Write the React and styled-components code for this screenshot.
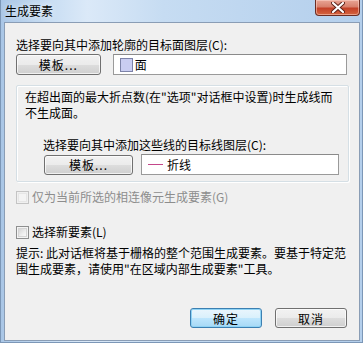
import React from 'react';
import styled, { createGlobalStyle } from 'styled-components';

const GlobalStyle = createGlobalStyle`
  html, body { margin: 0; padding: 0; background: #fff; }
  body { font-family: "Noto Sans CJK SC", "Noto Sans", sans-serif; font-size: 12px; color: #000; }
`;

const Window = styled.div`
  width: 363px;
  height: 343px;
  box-sizing: border-box;
  display: flex;
  flex-direction: column;
  padding: 0 2px 1px 3px;
  background: linear-gradient(to right, #a9c6e6 0%, #c9def3 14%, #dbe9f8 24%, #c6dcf2 45%, #bcd5ef 75%, #b4cfec 100%);
  border-left: 1px solid #7c97b7;
  border-right: 1px solid #7c97b7;
  border-bottom: 1px solid #7c97b7;
`;

const TitleBar = styled.div`
  height: 22px;
  display: flex;
  align-items: flex-start;
  flex-shrink: 0;
`;

const Title = styled.div`
  font-size: 12px;
  line-height: 14px;
  margin-top: 4px;
  margin-left: 1px;
  color: #000;
  text-shadow: 0 0 6px rgba(255,255,255,0.9);
`;

const CloseButton = styled.div`
  margin-left: auto;
  width: 45px;
  height: 16px;
  box-sizing: border-box;
  border: 1px solid #6b2c22;
  border-top: none;
  border-radius: 0 0 4px 4px;
  background: linear-gradient(to bottom, #e9a595 0%, #d8806c 45%, #c44128 55%, #d5653f 100%);
  box-shadow: inset 0 0 0 1px rgba(255,220,210,0.5);
  display: flex;
  align-items: center;
  justify-content: center;
`;

const Client = styled.div`
  flex: 1;
  display: flex;
  flex-direction: column;
  background: #f0f0f0;
  border: 1px solid #8a9db5;
  padding: 0 12px 12px 11px;
`;

const Label = styled.div`
  line-height: 16px;
  margin-top: ${p => p.$top || 0}px;
  margin-left: ${p => p.$left || 0}px;
  white-space: nowrap;
`;

const Row = styled.div`
  display: flex;
  align-items: center;
  gap: ${p => p.$gap}px;
  margin-top: 1px;
  margin-left: ${p => p.$left || 0}px;
`;

const Button = styled.button`
  width: ${p => p.$w}px;
  height: ${p => p.$h || 21}px;
  box-sizing: border-box;
  padding: 0;
  font: inherit;
  font-size: 12px;
  color: #000;
  border: 1px solid ${p => (p.$default ? '#3c7fb1' : '#707070')};
  border-radius: 3px;
  background: ${p =>
    p.$default
      ? 'linear-gradient(to bottom, #eaf6fd 0%, #d9f0fc 50%, #bee6fd 51%, #a7d9f5 100%)'
      : 'linear-gradient(to bottom, #f2f2f2 0%, #ebebeb 50%, #dddddd 51%, #cfcfcf 100%)'};
  box-shadow: inset 0 0 0 1px ${p => (p.$default ? '#8fd3f5' : 'rgba(255,255,255,0.7)')};
  display: flex;
  align-items: center;
  justify-content: center;
  letter-spacing: 1px;
`;

const Field = styled.div`
  width: ${p => p.$w}px;
  height: 21px;
  box-sizing: border-box;
  background: #fff;
  border: 1px solid #9a9a9a;
  border-top-color: #8a8a8a;
  display: flex;
  align-items: center;
  padding-left: ${p => p.$pad}px;
  gap: 2px;
`;

const FillSwatch = styled.span`
  width: 13px;
  height: 14px;
  box-sizing: border-box;
  background: #c9cdf1;
  border: 1px solid #7d83a8;
`;

const LineSwatch = styled.span`
  width: 15px;
  height: 1px;
  background: #c4468a;
  margin-right: 2px;
`;

const GroupBox = styled.div`
  margin-top: 10px;
  width: 333px;
  height: 97px;
  box-sizing: border-box;
  border: 1px solid #d5dfe5;
  box-shadow: inset 1px 1px 0 #fff, 1px 1px 0 #fff;
  border-radius: 2px;
  padding: 3px 0 0 8px;
`;

const Note = styled.div`
  line-height: 16px;
  white-space: nowrap;
`;

const CheckRow = styled.div`
  display: flex;
  align-items: center;
  gap: 3px;
  line-height: 16px;
  margin-top: ${p => p.$top}px;
  color: ${p => (p.$disabled ? '#8d8d8d' : '#000')};
`;

const Box = styled.span`
  width: 13px;
  height: 13px;
  box-sizing: border-box;
  border: 1px solid ${p => (p.$disabled ? '#c4c4c4' : '#8e8f8f')};
  background: ${p =>
    p.$disabled
      ? '#f4f4f4'
      : 'linear-gradient(135deg, #cbcbcb 0%, #f0f0f0 60%, #ffffff 100%)'};
  box-shadow: inset 0 0 0 1px ${p => (p.$disabled ? '#f0f0f0' : '#f4f4f4')}, inset 0 0 0 2px ${p => (p.$disabled ? '#e6e6e6' : '#d5d5d5')};
`;

const Hint = styled.div`
  line-height: 16px;
  margin-top: 5px;
  white-space: nowrap;
`;

const Footer = styled.div`
  margin-top: auto;
  display: flex;
  justify-content: flex-end;
  gap: 13px;
`;

const CloseGlyph = () => (
  <svg width="14" height="11" viewBox="0 0 14 11">
    <path d="M2 1 L12 10 M12 1 L2 10" stroke="#5a2017" strokeWidth="4" strokeLinecap="round" />
    <path d="M2 1 L12 10 M12 1 L2 10" stroke="#ffffff" strokeWidth="2.2" strokeLinecap="round" />
  </svg>
);

export default function App() {
  return (
    <>
      <GlobalStyle />
      <Window>
        <TitleBar>
          <Title>生成要素</Title>
          <CloseButton>
            <CloseGlyph />
          </CloseButton>
        </TitleBar>
        <Client>
          <Label $top={14}>选择要向其中添加轮廓的目标面图层(C):</Label>
          <Row $gap={12}>
            <Button $w={86}>模板...</Button>
            <Field $w={238} $pad={6}>
              <FillSwatch />
              <span>面</span>
            </Field>
          </Row>
          <GroupBox>
            <Note>
              在超出面的最大折点数(在"选项"对话框中设置)时生成线而
              <br />
              不生成面。
            </Note>
            <Label $top={16} $left={18}>选择要向其中添加这些线的目标线图层(C):</Label>
            <Row $gap={8} $left={19}>
              <Button $w={89} $h={20}>模板...</Button>
              <Field $w={198} $pad={6}>
                <LineSwatch />
                <span>折线</span>
              </Field>
            </Row>
          </GroupBox>
          <CheckRow $top={7} $disabled>
            <Box $disabled />
            <span>仅为当前所选的相连像元生成要素(G)</span>
          </CheckRow>
          <CheckRow $top={19}>
            <Box />
            <span>选择新要素(L)</span>
          </CheckRow>
          <Hint>
            提示: 此对话框将基于栅格的整个范围生成要素。要基于特定范
            <br />
            围生成要素，请使用"在区域内部生成要素"工具。
          </Hint>
          <Footer>
            <Button $w={72} $h={20} $default>确定</Button>
            <Button $w={72} $h={20}>取消</Button>
          </Footer>
        </Client>
      </Window>
    </>
  );
}
